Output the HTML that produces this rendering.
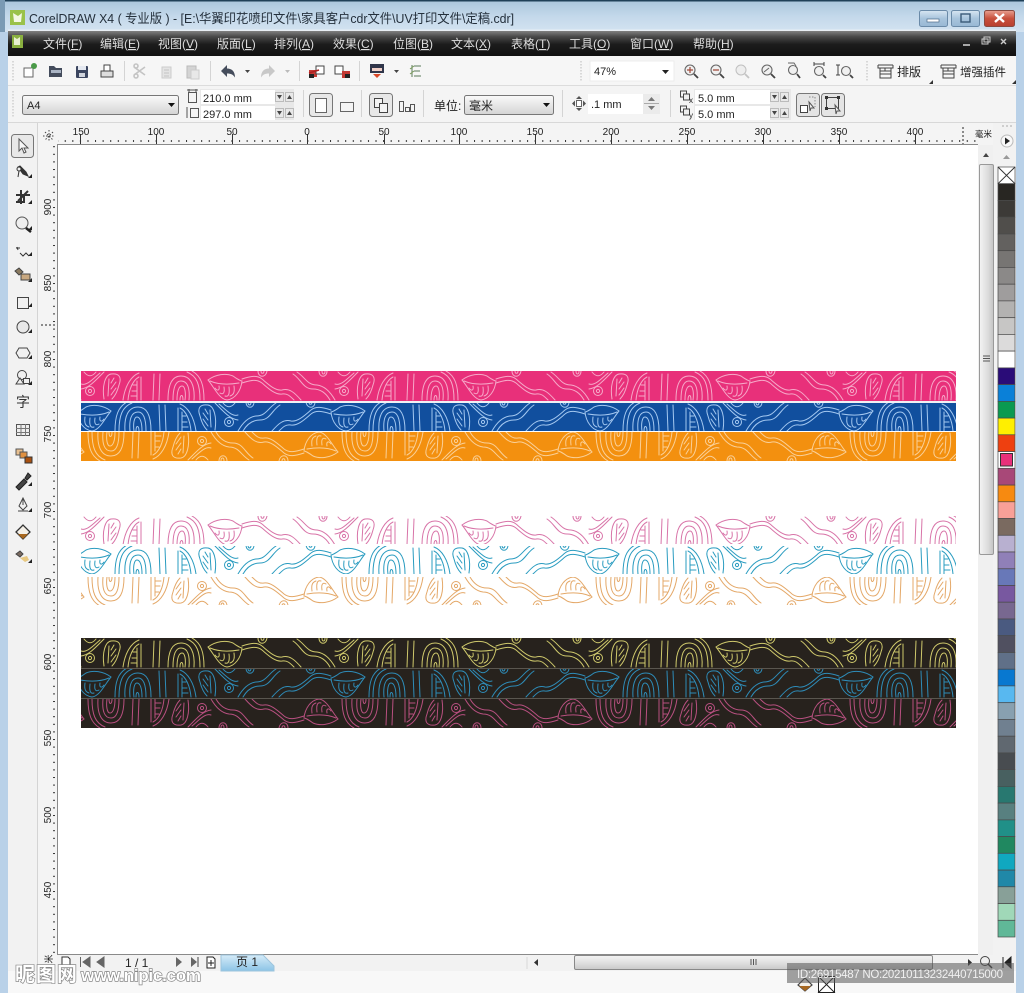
<!DOCTYPE html>
<html lang="zh"><head><meta charset="utf-8"><title>CorelDRAW X4</title>
<style>
html,body{margin:0;padding:0;background:#f4f4f4;overflow:hidden}
svg{display:block}
text{font-family:"Liberation Sans","Noto Sans CJK SC",sans-serif}
</style></head><body>
<svg xmlns="http://www.w3.org/2000/svg" width="1024" height="993" viewBox="0 0 1024 993">
<defs>
<linearGradient id="tb" x1="0" y1="0" x2="0" y2="1"><stop offset="0" stop-color="#a9c5dc"/><stop offset=".5" stop-color="#c3d8ea"/><stop offset="1" stop-color="#d3e3f1"/></linearGradient>
<linearGradient id="mb" x1="0" y1="0" x2="0" y2="1"><stop offset="0" stop-color="#8a8a8a"/><stop offset=".25" stop-color="#4a4a4a"/><stop offset=".55" stop-color="#1c1c1c"/><stop offset="1" stop-color="#111"/></linearGradient>
<linearGradient id="cb" x1="0" y1="0" x2="0" y2="1"><stop offset="0" stop-color="#fafafa"/><stop offset="1" stop-color="#d4d4d4"/></linearGradient>
<linearGradient id="vt" x1="0" y1="0" x2="1" y2="0"><stop offset="0" stop-color="#f4f4f4"/><stop offset=".6" stop-color="#dcdcdc"/><stop offset="1" stop-color="#c4c4c4"/></linearGradient>
<linearGradient id="ht" x1="0" y1="0" x2="0" y2="1"><stop offset="0" stop-color="#f4f4f4"/><stop offset=".6" stop-color="#dcdcdc"/><stop offset="1" stop-color="#c8c8c8"/></linearGradient>
<linearGradient id="tab" x1="0" y1="0" x2="0" y2="1"><stop offset="0" stop-color="#d6ebf8"/><stop offset="1" stop-color="#8cc4e6"/></linearGradient>
<linearGradient id="red" x1="0" y1="0" x2="0" y2="1"><stop offset="0" stop-color="#e8a090"/><stop offset=".5" stop-color="#c8503c"/><stop offset="1" stop-color="#b84030"/></linearGradient>
<linearGradient id="wb" x1="0" y1="0" x2="0" y2="1"><stop offset="0" stop-color="#d8e6f2"/><stop offset=".5" stop-color="#a8c4dc"/><stop offset="1" stop-color="#98b8d4"/></linearGradient>
<pattern id="dx" x="307.3" y="139" width="7.58" height="5" patternUnits="userSpaceOnUse"><rect x="0" y="1" width="1" height="2" fill="#333"/></pattern>
<pattern id="dy" x="50" y="207" width="5" height="7.6" patternUnits="userSpaceOnUse"><rect x="3" y="0" width="2" height="1" fill="#333"/></pattern>

<g id="m" fill="none" stroke-width="1" stroke-linecap="round">
<path d="M0 13C6 15 12 8 19 2M0 18C8 17 14 10 23 1M3 1C7 6 11 6 15 1"/>
<circle cx="9" cy="20" r="4.500"/><circle cx="9" cy="20" r="1.600"/>
<path d="M23 28C21 15 24 4 30 3C38 2 41 6 38 14C36 22 33 26 31 28M28 8L27 25M33 7L30 12M35 11L30 18M35 17L30 24"/>
<path d="M42 29C44 15 50 5 58 2M47 29C48 18 52 9 58 6M56 10L56 29M60 6L60 29M52 14L56 14M51 20L56 20M50 25L56 25"/>
<path d="M73 3L72 29M79 3L78 29"/>
<path d="M87 29C87 12 92 5 100 5C110 5 114 15 113 29M92 29C92 16 95 10 100 10C107 10 109 18 108 29M96 29C96 20 98 15 101 15C104 15 105 22 104 29M99 29C99 24 102 22 102 29"/>
<path d="M106 1C116 5 119 14 119 29M111 0C120 5 123 14 123 29"/>
<path d="M127 9C135 3 145 2 152 5C156 8 160 10 161 10C160 20 154 28 146 29C138 28 133 16 127 9ZM129 10C136 13 146 14 158 12"/>
<path d="M134 17C136 20 139 20 138 15M139 22C142 24 144 22 143 16M144 25C147 26 149 24 148 16M149 25C152 24 154 22 153 15"/>
<path d="M161 8C170 5 176 4 181 8C187 13 194 20 201 19C208 17 213 21 220 29M161 12C170 9 176 8 181 12C187 17 194 24 201 23C206 22 209 25 213 29"/>
<path d="M177 0C177 7 185 7 186 0M180 0C180 3 183 3 183 0"/>
<path d="M212 3C220 8 222 18 232 18C240 18 245 22 249 29M216 1C224 6 226 14 236 14C244 15 250 22 254 29"/>
<path d="M238 0C238 7 246 7 246 0M241 0C241 4 244 4 244 0"/>
</g>
<g id="r">
<use href="#m" x="-254"/><use href="#m"/><use href="#m" x="254"/><use href="#m" x="508"/><use href="#m" x="762"/><use href="#m" x="1016"/>
</g>
</defs>

<!-- window frame -->
<rect width="1024" height="993" fill="#b9d1e8"/>
<rect width="1024" height="32" fill="url(#tb)"/>
<rect width="1024" height="1.500" fill="#1f4058"/>
<rect x="0" y="0" width="5" height="32" fill="#7a9ab4"/>

<!-- title bar -->
<rect x="10" y="10" width="15" height="15" fill="#9ac24a"/>
<path d="M13 13l5 3 4-3-1 9-7 0z" fill="#f4f8e4"/>
<text x="29" y="23" font-size="12.800" fill="#24303c" textLength="485" lengthAdjust="spacingAndGlyphs">CorelDRAW X4 ( 专业版 ) - [E:\华翼印花喷印文件\家具客户cdr文件\UV打印文件\定稿.cdr]</text>
<rect x="919.500" y="10.500" width="28" height="16" rx="2" fill="url(#wb)" stroke="#6a8aa8"/>
<rect x="927" y="19" width="12" height="3" fill="#fff" stroke="#4a6a88" stroke-width=".7"/>
<rect x="951.500" y="10.500" width="28" height="16" rx="2" fill="url(#wb)" stroke="#6a8aa8"/>
<rect x="961" y="14" width="9" height="8" fill="none" stroke="#3a5a78" stroke-width="1.400"/>
<rect x="984.500" y="10.500" width="30" height="16" rx="2" fill="url(#red)" stroke="#8a4a40"/>
<path d="M995 14l9 8M1004 14l-9 8" stroke="#fff" stroke-width="2.400"/>

<!-- menu bar -->
<rect x="8" y="30" width="1008" height="26" fill="url(#mb)"/>
<rect x="8" y="29.500" width="1008" height="1.500" fill="#e8eef4"/>
<rect x="12" y="35" width="11" height="13" fill="#8ab040"/><path d="M14 37l3 2 3-2v8h-6z" fill="#e8f0d0"/>
<g font-size="12" fill="#ddd">
<text x="43" y="48">文件(<tspan text-decoration="underline">F</tspan>)</text>
<text x="100" y="48">编辑(<tspan text-decoration="underline">E</tspan>)</text>
<text x="158" y="48">视图(<tspan text-decoration="underline">V</tspan>)</text>
<text x="217" y="48">版面(<tspan text-decoration="underline">L</tspan>)</text>
<text x="274" y="48">排列(<tspan text-decoration="underline">A</tspan>)</text>
<text x="333" y="48">效果(<tspan text-decoration="underline">C</tspan>)</text>
<text x="393" y="48">位图(<tspan text-decoration="underline">B</tspan>)</text>
<text x="451" y="48">文本(<tspan text-decoration="underline">X</tspan>)</text>
<text x="511" y="48">表格(<tspan text-decoration="underline">T</tspan>)</text>
<text x="569" y="48">工具(<tspan text-decoration="underline">O</tspan>)</text>
<text x="630" y="48">窗口(<tspan text-decoration="underline">W</tspan>)</text>
<text x="693" y="48">帮助(<tspan text-decoration="underline">H</tspan>)</text>
</g>
<path d="M963 45h7" stroke="#ccc" stroke-width="1.600"/>
<rect x="982" y="39" width="6" height="5" fill="none" stroke="#ccc"/><rect x="984" y="37" width="6" height="5" fill="none" stroke="#ccc"/>
<path d="M1001 39l5 5M1006 39l-5 5" stroke="#ccc" stroke-width="1.400"/>

<!-- toolbar bg -->
<rect x="8" y="56" width="1008" height="915" fill="#f2f2f2"/>
<rect x="8" y="56" width="1008" height="29" fill="#f6f6f6"/>
<rect x="8" y="85" width="1008" height="1" fill="#dcdcdc"/>
<rect x="8" y="86" width="1008" height="37" fill="#f4f4f4"/>
<rect x="8" y="122" width="1008" height="1" fill="#d8d8d8"/>
<g stroke="#bbb" stroke-dasharray="1.500 1.500" fill="none"><path d="M13 61V81M13 91V117M581 61V81M867 61V81"/></g>
<g stroke="#d4d4d4"><path d="M124.500 61V81M210.500 61V81M299.500 61V81M359.500 61V81M303.500 90V117M361.500 90V117M423.500 90V117M562.500 90V117M670.500 90V117"/></g>

<!-- row 1 icons -->
<path d="M24 77V68h7l2-1V77z" fill="#fff" stroke="#666"/><circle cx="34" cy="66" r="3" fill="#4a9a48"/>
<path d="M49 77V66h5l2 2h6v9z" fill="#444c5c"/><path d="M51 70h10v3H51z" fill="#aab4c4"/>
<rect x="76" y="66" width="12" height="12" rx="1" fill="#3c4660"/><rect x="78" y="66" width="8" height="4" fill="#e4e8f0"/><rect x="79" y="73" width="6" height="4" fill="#d0d4dc"/>
<path d="M104 65h6v6h-6z" fill="#fff" stroke="#444"/><path d="M101 71h12v6h-12z" fill="#ddd" stroke="#444"/>
<g stroke="#c4c4c4" fill="none" stroke-width="1.600"><path d="M134 67l11 8M134 75l11-8"/><circle cx="136" cy="66" r="2"/><circle cx="136" cy="76" r="2"/></g>
<rect x="162" y="67" width="9" height="11" fill="#e4e4e4" stroke="#ccc"/><path d="M164 70h5M164 73h5M164 76h5" stroke="#c4c4c4"/>
<rect x="187" y="66" width="9" height="12" fill="#d4d4d4" stroke="#bbb"/><rect x="191" y="70" width="8" height="9" fill="#e8e8e8" stroke="#ccc"/>
<path d="M221 71l6-6v3.500c5 0 8 3 8 9-2-3-4-4-8-4v3.500z" fill="#454d5c"/>
<polygon points="245,70 250,70 247.500,73" fill="#444"/>
<path d="M275 71l-6-6v3.500c-5 0-8 3-8 9 2-3 4-4 8-4v3.500z" fill="#c8c8c8"/>
<polygon points="285,70 290,70 287.500,73" fill="#bbb"/>
<rect x="309" y="70" width="8" height="7" fill="#c43a34"/><rect x="316" y="66" width="8" height="8" fill="#fff" stroke="#444"/><path d="M309 73l10-3" stroke="#b02020" stroke-width="1.500"/><rect x="309" y="74" width="5" height="4" fill="#222"/>
<rect x="335" y="66" width="8" height="8" fill="#fff" stroke="#444"/><rect x="342" y="71" width="8" height="7" fill="#c43a34"/><rect x="345" y="74" width="5" height="4" fill="#222"/>
<rect x="370" y="64" width="14" height="9" fill="#30364a"/><rect x="372" y="68" width="10" height="3" fill="#f0d0c8"/><polygon points="373,74 381,74 377,78" fill="#d84828"/>
<polygon points="394,70 399,70 396.500,73" fill="#444"/>
<path d="M412 65v12M414 66h7M414 71h6M414 76h7" stroke="#5a7a5a" fill="none"/><path d="M410 69l4-3M410 74l4-3" stroke="#7a9a5a"/>

<!-- zoom combo -->
<rect x="590" y="61" width="84" height="20" fill="#fff" stroke="#ececec"/>
<text x="594" y="75" font-size="11" fill="#222">47%</text>
<polygon points="662,70 669,70 665.500,74" fill="#222"/>
<g fill="#f0f0f0" stroke="#666" stroke-width="1.100">
<circle cx="690" cy="70" r="5"/><circle cx="716" cy="70" r="5"/><circle cx="767" cy="70" r="5"/><circle cx="793" cy="70" r="4.500"/><circle cx="819" cy="71" r="4.500"/><circle cx="846" cy="71" r="4.500"/>
</g>
<circle cx="741" cy="70" r="5" fill="#eee" stroke="#c0c0c0"/>
<g stroke="#444" stroke-width="1.800"><path d="M694 74l4 4M720 74l4 4M771 74l4 4M797 74l3 4M823 75l3 3M850 75l3 3"/><path d="M745 74l4 4" stroke="#c4c4c4"/></g>
<path d="M687 70h6M690 67v6M713 70h6" stroke="#a04a3a" stroke-width="1.200"/>
<path d="M764 72l5-4" stroke="#666"/><path d="M814 64h10M814 62v4M824 62v4M838 65v10M836 65h4M836 75h4" stroke="#444" fill="none"/>
<path d="M788 63h6l2 3" stroke="#666" fill="#eee"/>
<!-- 排版 -->
<g fill="none" stroke="#444"><path d="M878 65h15M878 65v3h15v-3M880 68v10h11V68M880 71h11M880 74h11M885 68v3"/><path d="M941 65h15M941 65v3h15v-3M943 68v10h11V68M943 71h11M943 74h11M948 68v3"/></g>
<text x="897" y="76" font-size="12" fill="#222">排版</text>
<text x="960" y="76" font-size="11.500" fill="#222">增强插件</text>
<polygon points="929,84 933,80 933,84" fill="#333"/><polygon points="1012,84 1016,80 1016,84" fill="#333"/>

<!-- property bar -->
<rect x="22.500" y="95.500" width="156" height="19" rx="2" fill="url(#cb)" stroke="#777"/>
<text x="27" y="109" font-size="11" fill="#222">A4</text>
<polygon points="168,103 175,103 171.500,107" fill="#111"/>
<rect x="188.500" y="92.500" width="8" height="10" fill="#f4f4f4" stroke="#555"/><path d="M187 90h11M189 89v3M196 89v3" stroke="#555" fill="none"/>
<rect x="190.500" y="108.500" width="8" height="9" fill="#f4f4f4" stroke="#555"/><path d="M187 107v11" stroke="#555"/>
<rect x="200" y="89" width="94" height="31" fill="#e8e8e8"/>
<rect x="201" y="90" width="74" height="14" fill="#fff"/><rect x="201" y="106" width="74" height="14" fill="#fff"/>
<text x="203" y="102" font-size="11" fill="#222">210.0 mm</text><text x="203" y="118" font-size="11" fill="#222">297.0 mm</text>
<g fill="#e8e8e8" stroke="#bbb"><rect x="275.500" y="92.500" width="8" height="9"/><rect x="285.500" y="92.500" width="8" height="9"/><rect x="275.500" y="108.500" width="8" height="9"/><rect x="285.500" y="108.500" width="8" height="9"/></g>
<g fill="#444"><path d="M277 95h5l-2.500 4zM277 111h5l-2.500 4zM287 99h5l-2.500-4zM287 115h5l-2.500-4z"/></g>
<g fill="#e8e8e8" stroke="#777"><rect x="309.500" y="93.500" width="23" height="23" rx="3"/><rect x="369.500" y="93.500" width="23" height="23" rx="3"/></g>
<rect x="315.500" y="98.500" width="11" height="14" fill="#fdfdfd" stroke="#666"/>
<rect x="340.500" y="102.500" width="13" height="9" fill="#f4f4f4" stroke="#666"/>
<rect x="374.500" y="98.500" width="8" height="9" fill="#f4f4f4" stroke="#444"/><rect x="379.500" y="103.500" width="8" height="9" fill="#f4f4f4" stroke="#444"/>
<g fill="#f4f4f4" stroke="#555"><rect x="399.500" y="101.500" width="4" height="10"/><rect x="405.500" y="107.500" width="4" height="4"/><rect x="410.500" y="104.500" width="4" height="7"/></g>
<text x="434" y="110" font-size="12" fill="#222">单位:</text>
<rect x="464.500" y="95.500" width="89" height="19" rx="2" fill="url(#cb)" stroke="#777"/>
<text x="469" y="110" font-size="12" fill="#222">毫米</text>
<polygon points="543,103 550,103 546.500,107" fill="#111"/>
<path d="M579 96l3 3h-6zM579 111l3-3h-6zM572 103.500l3-3v6zM586 103.500l-3-3v6z" fill="#555"/><rect x="576.500" y="100.500" width="5" height="6" fill="#fff" stroke="#666"/>
<rect x="588" y="94" width="72" height="20" fill="#fff"/><rect x="643" y="94" width="17" height="20" fill="#ebebeb"/>
<text x="591" y="108" font-size="11" fill="#222">.1 mm</text>
<path d="M644 103.500h15" stroke="#aaa"/><polygon points="648,101 655,101 651.500,97" fill="#777"/><polygon points="648,106 655,106 651.500,110" fill="#777"/>
<rect x="680.500" y="91" width="6" height="6" fill="none" stroke="#444"/><rect x="683.500" y="94" width="6" height="6" fill="#eee" stroke="#444"/>
<rect x="680.500" y="106" width="6" height="6" fill="none" stroke="#444"/><rect x="683.500" y="109" width="6" height="6" fill="#eee" stroke="#444"/>
<text x="689" y="103" font-size="8" fill="#222">x</text><text x="689" y="118" font-size="8" fill="#222">y</text>
<rect x="694" y="89" width="97" height="31" fill="#e8e8e8"/>
<rect x="695" y="90" width="75" height="14" fill="#fff"/><rect x="695" y="106" width="75" height="14" fill="#fff"/>
<text x="698" y="102" font-size="11" fill="#222">5.0 mm</text><text x="698" y="118" font-size="11" fill="#222">5.0 mm</text>
<g fill="#e8e8e8" stroke="#bbb"><rect x="770.500" y="92.500" width="8" height="9"/><rect x="780.500" y="92.500" width="8" height="9"/><rect x="770.500" y="108.500" width="8" height="9"/><rect x="780.500" y="108.500" width="8" height="9"/></g>
<g fill="#444"><path d="M772 95h5l-2.500 4zM772 111h5l-2.500 4zM782 99h5l-2.500-4zM782 115h5l-2.500-4z"/></g>
<g fill="#e4e4e4" stroke="#777"><rect x="796.500" y="93.500" width="23" height="23" rx="3"/><rect x="821.500" y="93.500" width="23" height="23" rx="3"/></g>
<rect x="800.500" y="105.500" width="7" height="7" fill="#fff" stroke="#444"/><path d="M809 97h6v10" stroke="#888" stroke-dasharray="1.500 1.500" fill="none"/><path d="M809 102l5 6-3 0-1 3z" fill="#eee" stroke="#555"/>
<rect x="826.500" y="97.500" width="12" height="11" fill="none" stroke="#444"/><path d="M825 96h3v3h-3zM837 96h3v3h-3zM825 107h3v3h-3z" fill="#333"/><path d="M835 105l5 6-3 0-1 3z" fill="#eee" stroke="#555"/>

<!-- top ruler -->
<rect x="38" y="123" width="955" height="22" fill="#f4f4f4"/>
<path d="M15 126h18" stroke="#aaa" stroke-dasharray="1.500 1.500"/>
<path d="M45 132l8 8M53 132l-8 8M49 130v12M43 136h12" stroke="#444" stroke-dasharray="1.500 1.500" fill="none"/>
<rect x="58" y="140" width="920" height="4" fill="url(#dx)"/>
<rect x="57" y="144" width="921" height="1" fill="#8a8a8a"/>
<path d="M80.500 134v10M156.500 134v10M232.500 134v10M307.500 134v10M384.500 134v10M459.500 134v10M535.500 134v10M611.500 134v10M687.500 134v10M763.500 134v10M839.500 134v10M915.500 134v10" stroke="#333"/>
<g font-size="10" fill="#222" text-anchor="middle">
<text x="81" y="135">150</text><text x="156" y="135">100</text><text x="232" y="135">50</text><text x="307" y="135">0</text><text x="384" y="135">50</text><text x="459" y="135">100</text><text x="535" y="135">150</text><text x="611" y="135">200</text><text x="687" y="135">250</text><text x="763" y="135">300</text><text x="839" y="135">350</text><text x="915" y="135">400</text>
</g>
<path d="M963 127v17" stroke="#222" stroke-dasharray="2 2"/>
<text x="975" y="137" font-size="8.500" fill="#222">毫米</text>

<!-- left tool bar -->
<rect x="8" y="123" width="30" height="848" fill="#f2f2f2"/>
<rect x="37" y="123" width="1" height="848" fill="#d4d4d4"/>
<rect x="11.500" y="134.500" width="22" height="23" rx="3" fill="#e8e8e8" stroke="#777"/>
<path d="M19 139v12l3-3 2 5 2-1-2-4h4z" fill="#f8f8f8" stroke="#555"/>
<g fill="#222">
<polygon points="28,178 32,178 32,174"/><polygon points="28,204 32,204 32,200"/><polygon points="28,230 32,230 32,226"/><polygon points="28,256 32,256 32,252"/><polygon points="28,282 32,282 32,278"/><polygon points="28,307 32,307 32,303"/><polygon points="28,333 32,333 32,329"/><polygon points="28,359 32,359 32,355"/><polygon points="28,385 32,385 32,381"/><polygon points="28,461 32,461 32,457"/><polygon points="28,486 32,486 32,482"/><polygon points="28,512 32,512 32,508"/><polygon points="28,563 32,563 32,559"/>
</g>
<path d="M18 167l5 7 5 2-2-4-6-6zM19 171l-1 6" fill="#333" stroke="#333"/><circle cx="19" cy="169" r="2" fill="#eee" stroke="#333"/>
<path d="M16 195h14M21 190v14M18 201l10-10M24 194v8h-8" stroke="#333" stroke-width="2" fill="none"/>
<circle cx="22" cy="223" r="6" fill="#eee" stroke="#555"/><path d="M26 228l5 4" stroke="#222" stroke-width="2.500"/>
<path d="M17 247l1 3M16 248h4M20 253l3 3 3-3 3 3" stroke="#333" fill="none"/>
<path d="M15 271l4-3 4 4-4 3z" fill="#8a7a60" stroke="#444"/><rect x="21" y="274" width="9" height="6" fill="#c8a880" stroke="#444"/>
<rect x="17.500" y="297.500" width="11" height="11" fill="#f0f0f0" stroke="#444"/>
<circle cx="23" cy="327" r="6" fill="#e8e8e8" stroke="#444"/>
<path d="M19 348h8l3 5-3 5h-8l-3-5z" fill="#f0f0f0" stroke="#444"/>
<circle cx="22" cy="375" r="4.500" fill="#f0f0f0" stroke="#444"/><rect x="23.500" y="378.500" width="6" height="5" fill="#f0f0f0" stroke="#444"/><path d="M16 384l4-6 4 6z" fill="#f0f0f0" stroke="#444"/>
<text x="23" y="407" font-size="14" fill="#333" text-anchor="middle">字</text>
<rect x="16.500" y="424.500" width="13" height="11" fill="#eee" stroke="#555"/><path d="M16 428.500h14M16 432.500h14M21 424v12M25.500 424v12" stroke="#777"/>
<rect x="16" y="449" width="7" height="6" fill="#e8c090" stroke="#555"/><rect x="20" y="452" width="7" height="6" fill="#e09040" stroke="#555"/><rect x="25" y="457" width="7" height="6" fill="#a85010" stroke="#333"/>
<path d="M16 487l8-8 3 3-8 8zM25 478l3-5 3 3-4 4z" fill="#444" stroke="#222"/>
<path d="M23 498l-4 8 4 4 4-4zM23 498v7" fill="#f0f0f0" stroke="#444"/><path d="M18 511h10" stroke="#444"/>
<path d="M16 532l7-7 7 7-7 7z" fill="#f4f0e8" stroke="#333" stroke-width="1.300"/><path d="M18 534h10l-5 5z" fill="#a86820"/>
<path d="M16 554l4-3 3 3-3 3z" fill="#7a6a60" stroke="#444"/><path d="M20 558l7-2 2 4-4 2z" fill="#e8c880"/>

<!-- vertical ruler -->
<rect x="38" y="145" width="19" height="826" fill="#f4f4f4"/>
<rect x="50" y="145" width="6" height="810" fill="url(#dy)"/>
<rect x="57" y="144" width="1" height="811" fill="#8a8a8a"/>
<path d="M41 325h16" stroke="#222" stroke-dasharray="2 2"/>
<g font-size="10" fill="#222" text-anchor="middle">
<text transform="translate(51,207) rotate(-90)">900</text>
<text transform="translate(51,283) rotate(-90)">850</text>
<text transform="translate(51,359) rotate(-90)">800</text>
<text transform="translate(51,434) rotate(-90)">750</text>
<text transform="translate(51,510) rotate(-90)">700</text>
<text transform="translate(51,586) rotate(-90)">650</text>
<text transform="translate(51,662) rotate(-90)">600</text>
<text transform="translate(51,738) rotate(-90)">550</text>
<text transform="translate(51,815) rotate(-90)">500</text>
<text transform="translate(51,890) rotate(-90)">450</text>
</g>
<text transform="translate(52,959) rotate(-90)" font-size="9" fill="#222" text-anchor="middle">米</text>

<!-- canvas -->
<rect x="58" y="145" width="920" height="810" fill="#fff"/>

<!-- coloured rows -->
<rect x="81" y="371" width="875" height="30" fill="#e8307a"/>
<rect x="81" y="403" width="875" height="28" fill="#114f9e"/>
<rect x="81" y="432" width="875" height="29" fill="#f3900f"/>
<rect x="81" y="401" width="875" height="2" fill="#f0f0f4"/>
<svg x="81" y="371" width="875" height="30" viewBox="0 0 875 30"><use href="#r" stroke="#f6a8c8"/></svg>
<svg x="81" y="403" width="875" height="28" viewBox="0 0 875 28"><use href="#r" transform="translate(1173,-1) scale(-1,1)" stroke="#a4c8f0"/></svg>
<svg x="81" y="432" width="875" height="29" viewBox="0 0 875 29"><use href="#r" transform="translate(1146,29) scale(-1,-1)" stroke="#fad098"/></svg>

<svg x="81" y="516" width="875" height="28" viewBox="0 0 875 28"><use href="#r" stroke="#d874a8"/></svg>
<svg x="81" y="546" width="875" height="28" viewBox="0 0 875 28"><use href="#r" transform="translate(1173,-1) scale(-1,1)" stroke="#2a9cc0"/></svg>
<svg x="81" y="577" width="875" height="28" viewBox="0 0 875 28"><use href="#r" transform="translate(1146,29) scale(-1,-1)" stroke="#e4a868"/></svg>

<rect x="81" y="638" width="875" height="90" fill="#27221d"/>
<rect x="81" y="668" width="875" height="1" fill="#5a564f"/>
<rect x="81" y="698" width="875" height="1" fill="#5a564f"/>
<svg x="81" y="638" width="875" height="30" viewBox="0 0 875 30"><use href="#r" stroke="#cfc96c" stroke-width="1.200"/></svg>
<svg x="81" y="669" width="875" height="29" viewBox="0 0 875 29"><use href="#r" transform="translate(1173,-1) scale(-1,1)" stroke="#2e8cb8" stroke-width="1.200"/></svg>
<svg x="81" y="699" width="875" height="29" viewBox="0 0 875 29"><use href="#r" transform="translate(1146,29) scale(-1,-1)" stroke="#b85080" stroke-width="1.200"/></svg>

<!-- vertical scrollbar -->
<rect x="978" y="145" width="38" height="826" fill="#f2f2f2"/>
<rect x="978" y="145" width="15" height="810" fill="#f0f0f0"/>
<polygon points="983,157 989,157 986,153" fill="#444"/>
<rect x="979.500" y="164.500" width="14" height="390" rx="1.500" fill="url(#vt)" stroke="#999"/>
<path d="M983 356h7M983 358.500h7M983 361h7" stroke="#555"/>
<polygon points="983,960 989,960 986,964" fill="#444"/>

<!-- palette -->
<path d="M1002 126h2M1006 126h2M1010 126h2" stroke="#aaa"/>
<circle cx="1007" cy="141" r="6" fill="#f8f8f8" stroke="#bbb"/><polygon points="1005,137.500 1005,144.500 1010,141" fill="#222"/>
<polygon points="1003,159 1010,159 1006.500,155" fill="#999"/>
<g stroke="#4a4a4a" stroke-width=".7">
<rect x="998" y="167" width="17" height="16.700" fill="#fff"/>
<rect x="998" y="183.700" width="17" height="16.800" fill="#282622"/>
<rect x="998" y="200.500" width="17" height="16.700" fill="#3c3a37"/>
<rect x="998" y="217.200" width="17" height="16.800" fill="#504e4b"/>
<rect x="998" y="234" width="17" height="16.700" fill="#63615f"/>
<rect x="998" y="250.700" width="17" height="16.700" fill="#777573"/>
<rect x="998" y="267.400" width="17" height="16.800" fill="#8b8988"/>
<rect x="998" y="284.200" width="17" height="16.700" fill="#9f9d9d"/>
<rect x="998" y="300.900" width="17" height="16.800" fill="#b3b2b1"/>
<rect x="998" y="317.700" width="17" height="16.700" fill="#c7c6c5"/>
<rect x="998" y="334.400" width="17" height="16.700" fill="#dcdbdb"/>
<rect x="998" y="351.100" width="17" height="16.800" fill="#fff"/>
<rect x="998" y="367.900" width="17" height="16.700" fill="#2a0c78"/>
<rect x="998" y="384.600" width="17" height="16.800" fill="#0a80d8"/>
<rect x="998" y="401.400" width="17" height="16.700" fill="#0a9a50"/>
<rect x="998" y="418.100" width="17" height="16.700" fill="#ffef00"/>
<rect x="998" y="434.800" width="17" height="16.800" fill="#ee4010"/>
<rect x="998" y="451.600" width="17" height="16.700" fill="#fff"/>
<rect x="998" y="468.300" width="17" height="16.800" fill="#a84878"/>
<rect x="998" y="485.100" width="17" height="16.700" fill="#f78a10"/>
<rect x="998" y="501.800" width="17" height="16.700" fill="#f8a098"/>
<rect x="998" y="518.500" width="17" height="16.800" fill="#7a6a60"/>
<rect x="998" y="535.300" width="17" height="16.700" fill="#b8b0d0"/>
<rect x="998" y="552" width="17" height="16.800" fill="#9080b8"/>
<rect x="998" y="568.800" width="17" height="16.700" fill="#6878b8"/>
<rect x="998" y="585.500" width="17" height="16.700" fill="#7858a0"/>
<rect x="998" y="602.200" width="17" height="16.800" fill="#786890"/>
<rect x="998" y="619" width="17" height="16.700" fill="#4a5a80"/>
<rect x="998" y="635.700" width="17" height="16.800" fill="#505060"/>
<rect x="998" y="652.500" width="17" height="16.700" fill="#607088"/>
<rect x="998" y="669.200" width="17" height="16.700" fill="#0878d0"/>
<rect x="998" y="685.900" width="17" height="16.800" fill="#58b8f0"/>
<rect x="998" y="702.700" width="17" height="16.700" fill="#88a0b0"/>
<rect x="998" y="719.400" width="17" height="16.800" fill="#708090"/>
<rect x="998" y="736.200" width="17" height="16.700" fill="#606870"/>
<rect x="998" y="752.900" width="17" height="16.700" fill="#484c50"/>
<rect x="998" y="769.600" width="17" height="16.800" fill="#486060"/>
<rect x="998" y="786.400" width="17" height="16.700" fill="#287870"/>
<rect x="998" y="803.100" width="17" height="16.800" fill="#588080"/>
<rect x="998" y="819.900" width="17" height="16.700" fill="#209088"/>
<rect x="998" y="836.600" width="17" height="16.700" fill="#208860"/>
<rect x="998" y="853.300" width="17" height="16.800" fill="#10a8c0"/>
<rect x="998" y="870.100" width="17" height="16.700" fill="#2088a8"/>
<rect x="998" y="886.800" width="17" height="16.800" fill="#88a098"/>
<rect x="998" y="903.600" width="17" height="16.700" fill="#a0d8b8"/>
<rect x="998" y="920.300" width="17" height="16.700" fill="#60b898"/>
</g>
<path d="M998 167l17 16.700M1015 167l-17 16.700" stroke="#333"/>
<rect x="1000.500" y="453.500" width="12" height="12.500" fill="#e8307a" stroke="#333"/>
<polygon points="1003,960 1010,960 1006.500,964" fill="#444"/>

<!-- bottom strip -->
<rect x="58" y="954" width="920" height="1" fill="#8a8a8a"/>
<rect x="58" y="955" width="958" height="16" fill="#f2f2f2"/>
<rect x="8" y="971" width="1008" height="22" fill="#f8f8f8"/>
<path d="M62 957h6l2 2v8h-8z" fill="#fff" stroke="#333"/>
<path d="M80.500 957v10M90 957v10l-7-5zM104 957v10l-7-5z" fill="#666" stroke="#666"/>
<text x="125" y="967" font-size="12" fill="#222">1 / 1</text>
<path d="M176 957v10l6-5zM191 957v10l6-5z" fill="#666"/><path d="M198 957v10" stroke="#444"/>
<path d="M207 957h6l2 2v9h-8z" fill="#fff" stroke="#222"/><path d="M211 960v6M208 963h6" stroke="#222"/>
<path d="M221 971V955h42l11 11v5z" fill="url(#tab)" stroke="#9cc4dc"/>
<text x="236" y="966" font-size="12" fill="#222">页 1</text>
<path d="M527 957v12" stroke="#d8d8d8"/>
<polygon points="538,959 538,966 534,962.500" fill="#333"/>
<rect x="574.500" y="955.500" width="358" height="14" rx="1.500" fill="url(#ht)" stroke="#888"/>
<path d="M751 959v6M753.500 959v6M756 959v6" stroke="#555"/>
<polygon points="968,959 968,966 972,962.500" fill="#333"/>
<circle cx="985" cy="961" r="4.500" fill="#eee" stroke="#444"/><path d="M988 964l4 4" stroke="#333" stroke-width="1.500"/>
<path d="M1003 957v11M1011 957v11l-6-5.500z" fill="#222" stroke="#222"/>

<!-- status bar icons -->
<path d="M798 985l7-7 7 7-7 6z" fill="#f4f0e8" stroke="#444" stroke-width="1.200"/><path d="M799 986h12l-6 5z" fill="#a86820"/>
<rect x="818.500" y="976.500" width="16" height="16" fill="#fff" stroke="#222"/><path d="M818 976l17 17M835 976l-17 17" stroke="#222"/>

<!-- watermarks -->
<g font-weight="bold" fill="#fff" stroke="#888" stroke-width="1.400" paint-order="stroke">
<text x="15" y="981" font-size="20" textLength="62">昵图网</text>
<text x="81" y="981" font-size="17" textLength="120">www.nipic.com</text>
</g>
<rect x="787" y="963" width="227" height="20" fill="#555" fill-opacity=".55"/>
<text x="797" y="978" font-size="11.500" fill="#f0f0f0" textLength="206">ID:26915487 NO:20210113232440715000</text>
</svg>
</body></html>
